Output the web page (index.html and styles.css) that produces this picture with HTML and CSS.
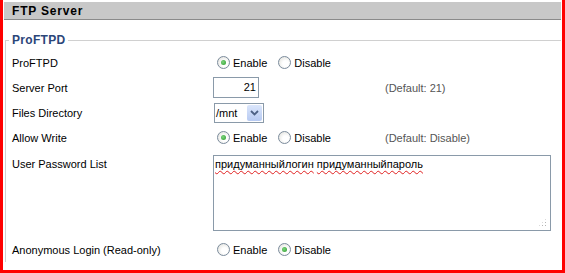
FILE: index.html
```html
<!DOCTYPE html>
<html>
<head>
<meta charset="utf-8">
<link rel="stylesheet" href="styles.css">
</head>
<body>
<div class="frame">
  <div class="header">FTP Server</div>
  <fieldset class="box">
    <legend class="legend">ProFTPD</legend>
    <div class="grid">
      <div class="label">ProFTPD</div>
      <div class="ctrl">
        <label class="opt"><span class="radio on"></span>Enable</label>
        <label class="opt"><span class="radio"></span>Disable</label>
      </div>
      <div class="hint"></div>

      <div class="label">Server Port</div>
      <div class="ctrl"><div class="input">21</div></div>
      <div class="hint">(Default: 21)</div>

      <div class="label">Files Directory</div>
      <div class="ctrl">
        <div class="select"><span class="sel-text">/mnt</span><span class="sel-btn"><svg width="9" height="6" viewBox="0 0 9 6"><path d="M1 1 L4.5 4.5 L8 1" fill="none" stroke="#4d6185" stroke-width="1.8"/></svg></span></div>
      </div>
      <div class="hint"></div>

      <div class="label">Allow Write</div>
      <div class="ctrl">
        <label class="opt"><span class="radio on"></span>Enable</label>
        <label class="opt"><span class="radio"></span>Disable</label>
      </div>
      <div class="hint">(Default: Disable)</div>

      <div class="label top">User Password List</div>
      <div class="ctrl wide">
        <div class="textarea"><span class="sp">придуманныйлогин</span> <span class="sp">придуманныйпароль</span><span class="grip"></span></div>
      </div>

      <div class="label">Anonymous Login (Read-only)</div>
      <div class="ctrl">
        <label class="opt"><span class="radio"></span>Enable</label>
        <label class="opt"><span class="radio on"></span>Disable</label>
      </div>
      <div class="hint"></div>
    </div>
  </fieldset>
</div>
</body>
</html>
```
FILE: styles.css
```css
html, body {
  margin: 0;
  padding: 0;
  background: #fff;
}
body {
  font-family: "Liberation Sans", Arial, sans-serif;
  font-size: 11px;
  color: #000;
}
.frame {
  width: 565px;
  height: 273px;
  box-sizing: border-box;
  border-left: 3px solid #f00;
  border-right: 3px solid #f00;
  border-bottom: 3px solid #f00;
  padding: 2px 1px 0 1px;
}
.header {
  height: 17px;
  background: #c8c8c8;
  border-bottom: 1px solid #8a8a8a;
  font-weight: bold;
  font-size: 12px;
  line-height: 18px;
  padding-left: 8px;
  letter-spacing: 0.8px;
}
.box {
  margin: 13px 0 0 1px;
  padding: 0;
  border: none;
  border-top: 1px solid #d0d0d0;
  border-left: 1px solid #d0d0d0;
  min-width: 0;
}
.legend {
  font-weight: bold;
  color: #2b4679;
  font-size: 12px;
  line-height: 14px;
  padding: 0 3px;
  margin-left: 3px;
  letter-spacing: 0.3px;
}
.grid {
  display: grid;
  grid-template-columns: 207px 172px 1fr;
  grid-template-rows: 25px 25px 25px 25px 87px 25px;
  margin-top: 3px;
}
.label {
  padding-left: 6px;
  display: flex;
  align-items: center;
}
.label.top {
  align-items: flex-start;
  padding-top: 8px;
}
.ctrl {
  display: flex;
  align-items: center;
  gap: 11px;
}
.ctrl.wide {
  grid-column: 2 / 4;
  align-items: flex-start;
  padding-top: 5px;
}
.hint {
  display: flex;
  align-items: center;
  color: #555;
}
.opt {
  display: flex;
  align-items: center;
  gap: 3px;
  margin-left: 4px;
}
.opt + .opt { margin-left: 0; }
.radio {
  width: 11px;
  height: 11px;
  border-radius: 50%;
  border: 1px solid #7b8b9c;
  background: radial-gradient(circle at 60% 60%, #ffffff 30%, #dcdcd6 100%);
  position: relative;
}
.radio.on::after {
  content: "";
  position: absolute;
  left: 3px;
  top: 3px;
  width: 5px;
  height: 5px;
  border-radius: 50%;
  background: radial-gradient(circle at 40% 40%, #7ed57e, #2a9a2a);
}
.input {
  width: 42px;
  height: 19px;
  border: 1px solid #8a9aa9;
  text-align: right;
  line-height: 19px;
  padding-right: 2px;
}
.select {
  width: 48px;
  height: 18px;
  border: 1px solid #8a9aa9;
  display: flex;
  align-items: center;
  justify-content: space-between;
  margin-left: 1px;
}
.sel-text { padding-left: 1px; }
.sel-btn {
  width: 15px;
  height: 16px;
  margin-right: 1px;
  background: linear-gradient(#dbe6fb, #b7caf2);
  border-radius: 2px;
  display: flex;
  align-items: center;
  justify-content: center;
}
.textarea {
  width: 334px;
  height: 70px;
  border: 1px solid #8a9aa9;
  position: relative;
  padding: 2px 1px;
  line-height: 13px;
}
.sp {
  text-decoration: underline wavy #e02020;
  text-decoration-thickness: 1px;
  text-underline-offset: 2px;
}
.grip {
  position: absolute;
  right: 3px;
  bottom: 3px;
  width: 9px;
  height: 9px;
  background:
    radial-gradient(circle, #b5b5b5 0.9px, transparent 1px) 0 0 / 3px 3px;
  clip-path: polygon(100% 0, 100% 100%, 0 100%);
}
```
